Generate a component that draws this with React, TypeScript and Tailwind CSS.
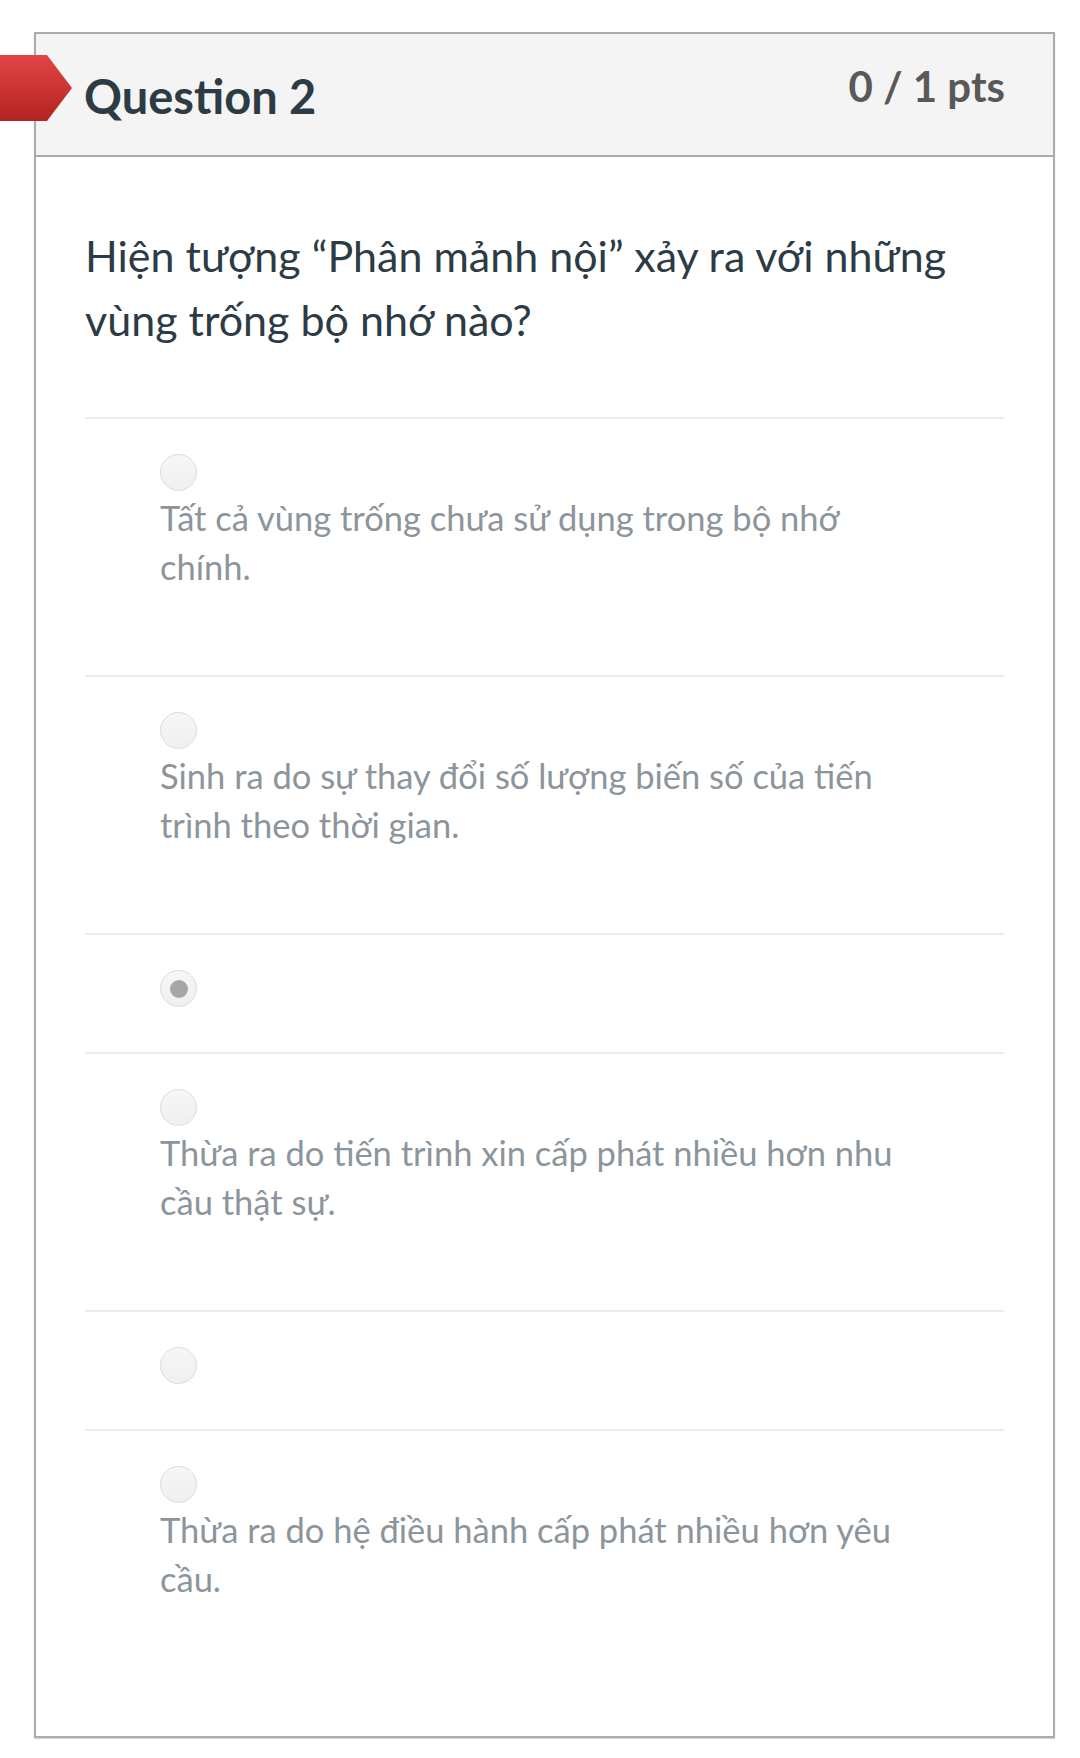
import React from 'react';

type Answer = { text?: string; selected?: boolean };

const answers: Answer[] = [
  { text: 'Tất cả vùng trống chưa sử dụng trong bộ nhớ chính.' },
  { text: 'Sinh ra do sự thay đổi số lượng biến số của tiến trình theo thời gian.' },
  { selected: true },
  { text: 'Thừa ra do tiến trình xin cấp phát nhiều hơn nhu cầu thật sự.' },
  {},
  { text: 'Thừa ra do hệ điều hành cấp phát nhiều hơn yêu cầu.' },
];

function Radio({ selected }: { selected?: boolean }) {
  return (
    <div className="w-[37px] h-[37px] rounded-full border border-[#dcdcdc] bg-gradient-to-b from-[#f7f7f7] to-[#efefef] flex items-center justify-center">
      {selected && <div className="w-[18px] h-[18px] rounded-full bg-[#a6a6a6]" />}
    </div>
  );
}

export default function App() {
  return (
    <div className="min-h-screen bg-white pt-[32px] pl-[34px] font-['Lato','Noto_Sans',sans-serif]">
      <div className="relative w-[1021px] border-2 border-[#ababab] shadow-[0_1px_1px_rgba(0,0,0,0.15)]">
        {/* red marker flag */}
        <div className="absolute -left-[36px] top-[21px] w-[72px] h-[66px] bg-gradient-to-b from-[#e24545] to-[#b3231f] [clip-path:polygon(0_0,47px_0,72px_50%,47px_100%,0_100%)]" />

        {/* header */}
        <div className="h-[123px] bg-[#f4f4f4] border-b-2 border-[#ababab] flex items-start justify-between px-[48px]">
          <h2 className="mt-[39px] text-[47px] leading-[47px] font-bold text-[#2d3b45]">Question 2</h2>
          <div className="mt-[31px] text-[42px] leading-[42px] font-bold text-[#595959]">0 / 1 pts</div>
        </div>

        {/* body */}
        <div className="px-[49px] pt-[67px] pb-[49px]">
          <p className="text-[43px] leading-[64px] text-[#2d3b45] mb-[65px]">
            Hiện tượng “Phân mảnh nội” xảy ra với những vùng trống bộ nhớ nào?
          </p>
          {answers.map((a, i) => (
            <div key={i} className="border-t-2 border-[#ececec] pt-[35px] pb-[45px] pl-[75px] pr-[90px]">
              <Radio selected={a.selected} />
              {a.text && (
                <div className="mt-[2px] mb-[39px] text-[34.5px] leading-[49px] text-[#8c959c]">{a.text}</div>
              )}
            </div>
          ))}
        </div>
      </div>
    </div>
  );
}
